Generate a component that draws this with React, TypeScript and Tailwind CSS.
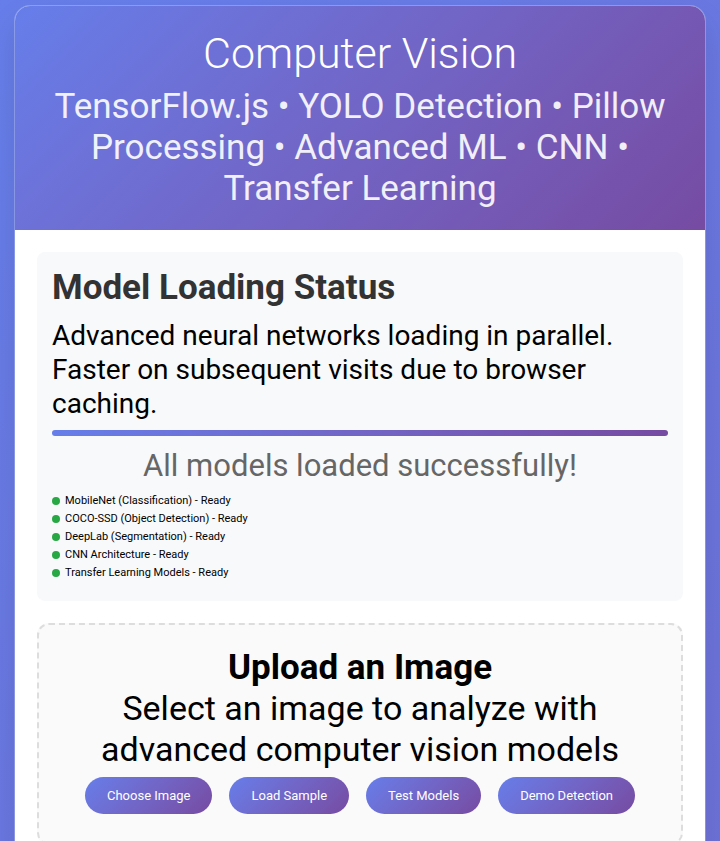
const models = [
  'MobileNet (Classification) - Ready',
  'COCO-SSD (Object Detection) - Ready',
  'DeepLab (Segmentation) - Ready',
  'CNN Architecture - Ready',
  'Transfer Learning Models - Ready',
];

const actions = ['Choose Image', 'Load Sample', 'Test Models', 'Demo Detection'];

export default function App() {
  return (
    <div className="h-screen overflow-hidden font-['Roboto',sans-serif] text-black">
      <div className="min-h-[5500px] bg-linear-135 from-[#667eea] to-[#764ba2] px-3.5 pt-[5px]">
        <main className="min-h-[5400px] overflow-hidden rounded-t-2xl border border-white/25 bg-white bg-clip-padding shadow-[0_15px_30px_rgba(0,0,0,0.1)]">
          <header className="bg-linear-135 from-[#667eea] to-[#764ba2] px-[22px] pt-[22px] pb-[21px] text-center text-white">
            <h1 className="mb-[7px] text-[43px] leading-[51px] font-light">Computer Vision</h1>
            <p className="text-[35px] leading-[41px] opacity-90">
              TensorFlow.js • YOLO Detection • Pillow Processing • Advanced ML • CNN • Transfer Learning
            </p>
          </header>
          <div className="flex flex-col gap-[22px] p-[22px]">
            <section className="rounded-lg bg-[#f8f9fb] px-[15px] pt-[15px] pb-[19px]">
              <h2 className="mb-[11px] text-[35px] leading-[41px] font-bold text-[#333]">Model Loading Status</h2>
              <p className="text-[28px] leading-[34px]">
                Advanced neural networks loading in parallel. Faster on subsequent visits due to browser caching.
              </p>
              <div className="mt-[9px] mb-3 h-1.5 rounded-sm bg-linear-to-r from-[#667eea] to-[#764ba2]" />
              <p className="mb-2 text-center text-[31px] leading-[36px] text-[#666]">
                All models loaded successfully!
              </p>
              <ul className="text-[11px] leading-[18px]">
                {models.map((m) => (
                  <li key={m} className="flex items-center gap-[5px]">
                    <span className="size-2 rounded-full bg-[#28a745]" />
                    {m}
                  </li>
                ))}
              </ul>
            </section>
            <section className="rounded-xl border-2 border-dashed border-[#ddd] bg-[#fafafa] px-5 pt-[22px] pb-[29px] text-center">
              <h2 className="text-[35px] leading-[41px] font-bold">Upload an Image</h2>
              <p className="mb-[7px] text-[34px] leading-[41px]">
                Select an image to analyze with advanced computer vision models
              </p>
              <div className="flex flex-wrap justify-center gap-[17px]">
                {actions.map((a) => (
                  <button
                    key={a}
                    type="button"
                    className="rounded-full bg-linear-135 from-[#667eea] to-[#764ba2] px-[22px] py-[9px] text-[13px] leading-[19px] text-white"
                  >
                    {a}
                  </button>
                ))}
              </div>
            </section>
          </div>
        </main>
      </div>
    </div>
  );
}
